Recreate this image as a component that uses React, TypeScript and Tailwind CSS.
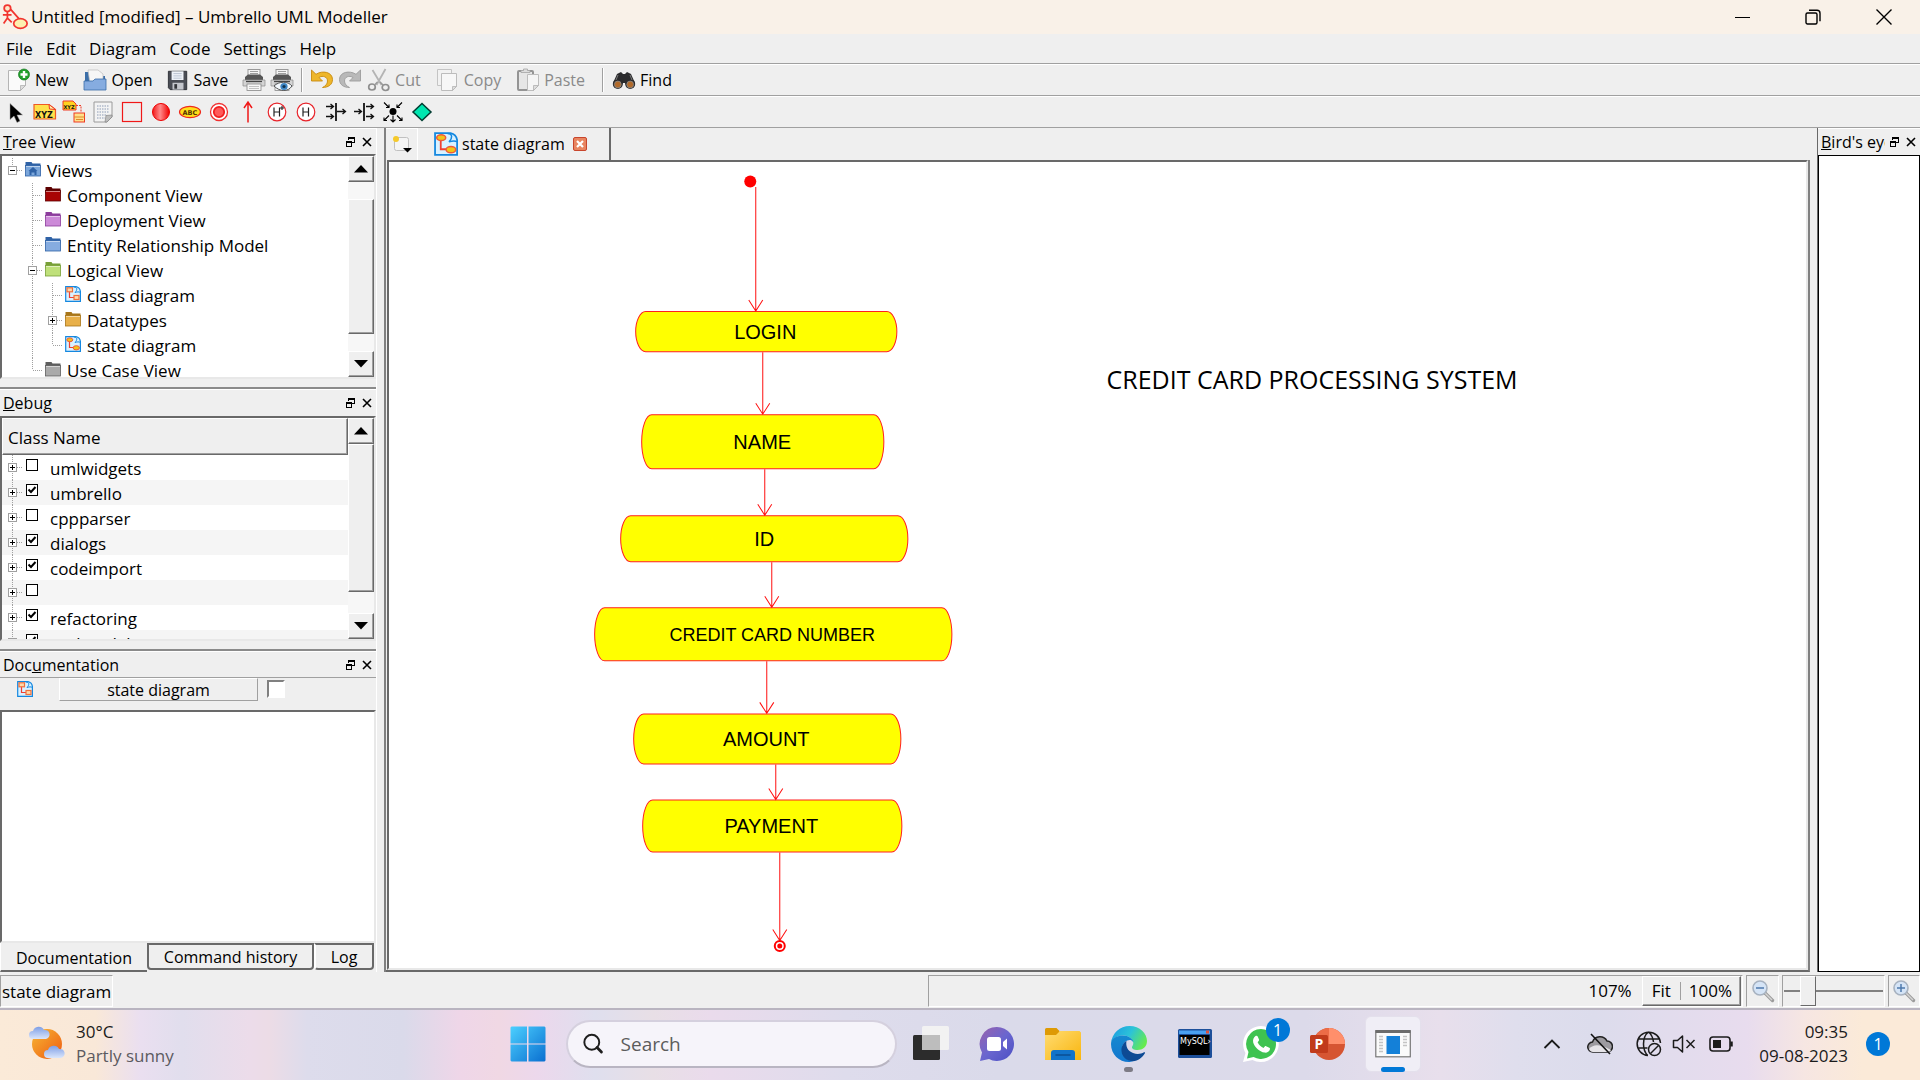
import React from "react";

const RAISED =
  "border border-t-white border-l-white border-b-[#696969] border-r-[#696969] bg-[#efefef] shadow-[inset_-1px_-1px_#a0a0a0]";

/* ---------- small icons ---------- */

function Svg({ s = 24, vb = 24, children }: { s?: number; vb?: number; children: React.ReactNode }) {
  return (
    <svg width={s} height={s} viewBox={`0 0 ${vb} ${vb}`} fill="none" className="shrink-0" aria-hidden="true">
      {children}
    </svg>
  );
}

const AppIcon = () => (
  <Svg s={26}>
    <g stroke="#f2352f" strokeWidth="1.6">
      <circle cx="5" cy="4" r="3" fill="#fde9c8" />
      <path d="M5 7v6M0.800 10h8M5 13l-3.500 5M5 13l4 4M8 5l8 9" />
      <ellipse cx="17" cy="18" rx="6.200" ry="4.400" fill="#fdf0b0" />
    </g>
  </Svg>
);

const NewIcon = () => (
  <Svg>
    <path d="M1.500 2.500h17v15l-5 5h-12z" fill="#fafafa" stroke="#b4b4b4" />
    <path d="M18.500 17.500h-5v5z" fill="#ddd" stroke="#aaa" strokeWidth=".7" />
    <circle cx="17" cy="6.500" r="5.500" fill="#22a02c" stroke="#157a1f" strokeWidth=".7" />
    <path d="M17 3v7M13.500 6.500h7" stroke="#fff" strokeWidth="2.400" />
  </Svg>
);

const OpenIcon = () => (
  <Svg>
    <path d="M2 4h9l2 4h9v12H2z" fill="#3b6ea8" />
    <path d="M5 2h10l5 4v10H7z" fill="#f6f6f6" stroke="#bbb" strokeWidth=".7" />
    <path d="M1 13h9l2-2h11v11H1z" fill="#86ace0" stroke="#3a6ca8" strokeWidth=".8" />
  </Svg>
);

const SaveIcon = () => (
  <Svg s={22}>
    <path d="M1.500 2.500h20v20h-18l-2-2z" fill="#4a4d55" stroke="#2c2e33" />
    <rect x="5" y="2.500" width="13" height="9.500" fill="#eef2f8" />
    <path d="M7 5h9M7 7.500h9M7 10h9" stroke="#a9b4c4" strokeWidth=".8" />
    <rect x="6" y="15" width="12" height="7.500" fill="#c3c6cc" />
    <rect x="8" y="16.500" width="3" height="5" fill="#33353a" />
  </Svg>
);

const PrintIcon = ({ eye = false }: { eye?: boolean }) => (
  <Svg>
    <rect x="6" y="1.500" width="12" height="8" fill="#f4f4f4" stroke="#999" />
    <path d="M3 9l3-2.500h12L21 9v4H3z" fill="#555" />
    <path d="M8 3.500h8M8 5.500h8" stroke="#888" strokeWidth=".8" />
    <path d="M1 12h22v6H1z" fill="#d4d4d4" stroke="#8a8a8a" strokeWidth=".7" />
    <path d="M4 13.500h16" stroke="#444" strokeWidth="1.300" />
    <rect x="5" y="16" width="14" height="6.500" fill="#f7f7f7" stroke="#888" strokeWidth=".8" />
    <path d="M7 18.500h10M7 20.500h10" stroke="#aaa" strokeWidth=".7" />
    {eye && (
      <>
        <path d="M4 18c5-5 14-5 18 0-4 6-12 6-18 0z" fill="#f3f8fc" stroke="#555" />
        <circle cx="14" cy="18.500" r="3.600" fill="#3e86c4" />
        <circle cx="14" cy="18.500" r="1.600" fill="#12334f" />
      </>
    )}
  </Svg>
);

const UndoIcon = ({ redo = false }: { redo?: boolean }) => (
  <Svg>
    <g transform={redo ? "translate(24 0) scale(-1 1)" : undefined}>
      <path
        d="M1.500 2v11h11L9 9.500c4-2.500 8.500-.5 8.500 3.500 0 3-2 5-5 6.500 6 0 10-3 10-8 0-7.500-10-9.500-16.500-5.200z"
        fill={redo ? "#b9b9b9" : "#eeb62a"}
        stroke={redo ? "#9c9c9c" : "#c78a10"}
        strokeWidth=".9"
      />
    </g>
  </Svg>
);

const CutIcon = () => (
  <Svg>
    <path d="M5.500 2l9 15M18.500 1l-9 16" stroke="#b4b4b4" strokeWidth="1.800" />
    <ellipse cx="5" cy="19" rx="3.300" ry="3" stroke="#8f8f8f" strokeWidth="1.700" />
    <ellipse cx="18.500" cy="19.500" rx="3.300" ry="3" stroke="#8f8f8f" strokeWidth="1.700" />
    <path d="M7.500 17l3-3M16 17l-3-3" stroke="#999" strokeWidth="1.500" />
  </Svg>
);

const CopyIcon = () => (
  <Svg>
    <path d="M1.500 1.500h14v16h-14z" fill="#f2f2f2" stroke="#c4c4c4" />
    <path d="M5.500 5.500h15v13l-4 4h-11z" fill="#f7f7f7" stroke="#bcbcbc" />
    <path d="M20.500 18.500h-4v4z" fill="#ddd" stroke="#b4b4b4" strokeWidth=".8" />
  </Svg>
);

const PasteIcon = () => (
  <Svg>
    <rect x="2" y="3" width="15" height="19" rx="1" fill="#e6e6e6" stroke="#949494" strokeWidth="2" />
    <path d="M5 4.500h9V2.500h-2.500V1h-4v1.500H5z" fill="#ddd" stroke="#a4a4a4" strokeWidth=".8" />
    <path d="M11.500 6.500h11v11l-5 5h-6z" fill="#f5f5f5" stroke="#bdbdbd" />
    <path d="M22.500 17.500h-5v5z" fill="#ddd" stroke="#b0b0b0" strokeWidth=".8" />
  </Svg>
);

const FindIcon = () => (
  <Svg>
    <path d="M5 6l4-2 2 2h2l2-2 4 2 4 9-1 3-7 1-2-4h-2l-2 4-7-1-1-3z" fill="#2b2b2d" />
    <circle cx="5.800" cy="16" r="5" fill="#2b2b2d" />
    <circle cx="18.200" cy="16" r="5" fill="#2b2b2d" />
    <circle cx="5.800" cy="16.500" r="3.400" fill="#b26a2a" stroke="#8a8a8a" strokeWidth=".8" />
    <circle cx="18.200" cy="16.500" r="3.400" fill="#b26a2a" stroke="#8a8a8a" strokeWidth=".8" />
    <path d="M6 7l-2 5M18 7l2 5" stroke="#777" />
  </Svg>
);

const Folder = ({ c, d, home = false }: { c: string; d: string; home?: boolean }) => (
  <Svg s={16} vb={16}>
    <path d="M.5 1h6l1 1.500h8v5H.5z" fill={d} />
    <rect x=".5" y="4.500" width="15" height="10.500" fill={c} stroke={d} strokeWidth=".8" />
    <path d="M1 5.500h14" stroke="#fff" strokeOpacity=".5" />
    {home && <path d="M8 6l4.500 4h-1v4h-2v-2.500h-3V14h-2v-4h-1z" fill="#2f62a6" />}
  </Svg>
);

const DiagramIcon = ({ s = 16, kind = "state" }: { s?: number; kind?: "state" | "class" }) => (
  <Svg s={s} vb={16}>
    <path d="M.7.700h10.300c2.500.5 4 2 4.400 4.600v10H.7z" fill="#d9f1ff" stroke="#1488e0" strokeWidth="1.200" />
    <path d="M9 1c3.500 0 3.500 3 1 5.500 2-.6 4-1 5.300 0" stroke="#1488e0" />
    <path d="M4.500 5v6.500h5" stroke="#ef4034" strokeWidth="1.200" />
    {kind === "state" ? (
      <g fill="#f2c417" stroke="#ee5a3a">
        <ellipse cx="4.800" cy="3.800" rx="3" ry="1.900" />
        <ellipse cx="11.300" cy="11.800" rx="3.200" ry="2.100" />
      </g>
    ) : (
      <g fill="#ffd9a8" stroke="#f0703c" strokeWidth="1.200">
        <rect x="2" y="1.800" width="5.500" height="4" />
        <rect x="9" y="9.500" width="5" height="4" />
      </g>
    )}
  </Svg>
);

const FloatIcon = () => (
  <svg width="10" height="10" viewBox="0 0 10 10" fill="none" aria-hidden="true" shapeRendering="crispEdges">
    <path d="M3.500 3V.5h5.500v5H7M3 1.500h6" stroke="#000" />
    <path d="M1 4.500h5.500v4.500H1z M1 5.500h5" stroke="#000" />
  </svg>
);

const CrossIcon = () => (
  <svg width="10" height="10" viewBox="0 0 10 10" aria-hidden="true">
    <path d="M1 1l8 8M9 1l-8 8" stroke="#000" strokeWidth="1.600" />
  </svg>
);

const Magnifier = ({ plus = false }: { plus?: boolean }) => (
  <Svg s={24}>
    <path d="M14 14l7.500 7.500" stroke="#9b9b9b" strokeWidth="3.400" strokeLinecap="round" />
    <path d="M14 14l7 7" stroke="#d5d5d5" strokeWidth="1.400" />
    <circle cx="9" cy="9" r="7" fill="#d5e4f6" stroke="#a7b2c0" strokeWidth="1.600" />
    <path d={plus ? "M5 9h8M9 5v8" : "M5 9h8"} stroke="#4d79ad" strokeWidth="1.500" />
  </Svg>
);

/* ---------- palette of drawing tools ---------- */

const H = ({ star = false }: { star?: boolean }) => (
  <Svg>
    <circle cx="12" cy="12" r="8.800" fill="#fff" stroke="#e8232a" strokeWidth="1.200" />
    <path d="M9 7.500v9M14.500 7.500v9M9 12h5.500" stroke="#222" strokeWidth="1.200" />
    {star && <path d="M17 6v4M15 8h4" stroke="#222" strokeWidth="1.100" />}
  </Svg>
);

const TOOLS: { name: string; icon: React.ReactNode }[] = [
  { name: "Select", icon: <Svg><path d="M6 3.500v16l4-3.500 3 6.500 3-1.500-3-6h5.500z" fill="#000" stroke="#999" strokeWidth=".5" /></Svg> },
  {
    name: "Object node",
    icon: (
      <Svg>
        <path d="M1 4.500h15l6.500 5v9.500H1z" fill="#ffe14a" stroke="#ef5a24" strokeWidth="1.200" />
        <path d="M16 4.500l.5 4.500 6 .5z" fill="#fff3b0" stroke="#ef3b24" />
        <text x="2" y="17.500" fontSize="8" fontWeight="700" fill="#111" fontFamily="DejaVu Sans, sans-serif">XYZ</text>
      </Svg>
    ),
  },
  {
    name: "Object flow",
    icon: (
      <Svg>
        <path d="M1 1h10l3 3v6H1z" fill="#ffd21f" stroke="#ef3b24" />
        <text x="1.500" y="8.500" fontSize="5" fontWeight="700" fill="#111" fontFamily="DejaVu Sans, sans-serif">XYZ</text>
        <path d="M14 5.500h5v7" stroke="#ef3b24" strokeDasharray="2 1" />
        <rect x="12" y="13" width="10.500" height="9" fill="#ffe08a" stroke="#ef3b24" />
        <path d="M12 17h10.500M14 19.500h7" stroke="#e08a2a" />
      </Svg>
    ),
  },
  {
    name: "Note",
    icon: (
      <Svg>
        <path d="M3 2h18v15l-5 5H3z" fill="#f3f3f3" stroke="#9a9a9a" />
        <path d="M6 6h12M6 9h12M6 12h12M6 15h10M6 18h8" stroke="#8c9bb5" strokeDasharray="1.500 1" />
        <path d="M21 15l-6 .5L14 22h2l5-5z" fill="#bdbdbd" stroke="#888" strokeWidth=".7" />
      </Svg>
    ),
  },
  { name: "Box", icon: <Svg><rect x="2.500" y="2.500" width="19" height="19" stroke="#f01818" strokeWidth="1.200" /></Svg> },
  {
    name: "Initial state",
    icon: (
      <Svg>
        <defs>
          <linearGradient id="ini"><stop stopColor="#f01818" /><stop offset=".45" stopColor="#ff8a8a" /><stop offset="1" stopColor="#f00000" /></linearGradient>
        </defs>
        <circle cx="12" cy="12" r="8.500" fill="url(#ini)" stroke="#e00" />
      </Svg>
    ),
  },
  {
    name: "State",
    icon: (
      <Svg>
        <ellipse cx="12" cy="12" rx="10.500" ry="5.600" fill="#ffdf1a" stroke="#ef2a1c" strokeWidth="1.200" />
        <text x="4.500" y="14.500" fontSize="6.500" fontWeight="700" fill="#553300" fontFamily="DejaVu Sans, sans-serif">ABC</text>
      </Svg>
    ),
  },
  {
    name: "End state",
    icon: (
      <Svg>
        <circle cx="12" cy="12" r="8.500" fill="#fff" stroke="#f03030" strokeWidth="1.300" />
        <circle cx="12" cy="12" r="5.200" fill="#ff5a5a" stroke="#f02020" strokeWidth="1.800" />
      </Svg>
    ),
  },
  { name: "Transition", icon: <Svg><path d="M12 22.500V3M8 8l4-6 4 6" stroke="#f01818" strokeWidth="1.500" /></Svg> },
  { name: "Deep history", icon: <H star /> },
  { name: "Shallow history", icon: <H /> },
  {
    name: "Join",
    icon: (
      <Svg>
        <path d="M13 3v18" stroke="#111" strokeWidth="1.800" />
        <path d="M3 6.500h7M3 16.500h7M14 11.500h8M7.500 4l3 2.500-3 2.500M7.500 14l3 2.500-3 2.500M19.500 9l3 2.500-3 2.500" stroke="#111" strokeWidth="1.300" />
      </Svg>
    ),
  },
  {
    name: "Fork",
    icon: (
      <Svg>
        <path d="M12 3v18" stroke="#111" strokeWidth="1.800" />
        <path d="M14 6.500h7M14 16.500h7M2 11.500h7M18.500 4l3 2.500-3 2.500M18.500 14l3 2.500-3 2.500M6.500 9l3 2.500-3 2.500" stroke="#111" strokeWidth="1.300" />
      </Svg>
    ),
  },
  {
    name: "Junction",
    icon: (
      <Svg>
        <circle cx="12" cy="11.500" r="3.500" fill="#000" />
        <path d="M3 2.500l5 5M21 2.500l-5 5M8 4.500v3H5M16 4.500v3h3M8 15.500l-5 5M16 15.500l5 5M3 17.500v3h3M21 17.500v3h-3M12 15.500V22M9.500 19.500L12 22l2.500-2.500" stroke="#000" strokeWidth="1.100" />
      </Svg>
    ),
  },
  { name: "Choice", icon: <Svg><path d="M12 3.500l9 8.500-9 8.500-9-8.500z" fill="#00e6b0" stroke="#003c30" strokeWidth="1.500" /></Svg> },
];

function Separator() {
  return <div className="mx-[5px] h-6 w-0.5 border-l border-r border-l-[#a0a0a0] border-r-white" />;
}

function ToolButton({ icon, text, name, disabled }: { icon: React.ReactNode; text?: string; name?: string; disabled?: boolean }) {
  return (
    <button
      type="button"
      aria-label={name ?? text}
      className={
        "flex h-7 items-center gap-1 text-base leading-6 " +
        (text ? "pl-[3px] pr-3 " : "px-[2px] ") +
        (disabled ? "text-[#8a8a8a]" : "text-black")
      }
    >
      {icon}
      {text}
    </button>
  );
}

/* ---------- docks ---------- */

function DockTitle({ children }: { children: React.ReactNode }) {
  return (
    <div className="flex h-[26px] shrink-0 items-center border-t border-t-white pl-[3px] pr-px text-base leading-6">
      <h2 className="min-w-0 flex-1 overflow-hidden whitespace-nowrap">{children}</h2>
      <button type="button" aria-label="Float panel" className="flex size-[17px] items-center justify-center"><FloatIcon /></button>
      <button type="button" aria-label="Close panel" className="flex size-[17px] items-center justify-center"><CrossIcon /></button>
    </div>
  );
}

function Scrollbar({ before, thumb }: { before: string; thumb: string }) {
  return (
    <div className="flex w-[26px] shrink-0 flex-col bg-[#f7f7f7]">
      <button type="button" aria-label="Scroll up" className={"flex h-[26px] shrink-0 items-center justify-center " + RAISED}>
        <svg width="14" height="8" viewBox="0 0 14 8" aria-hidden="true"><path d="M7 0l7 7.500H0z" /></svg>
      </button>
      <div className={before} />
      <div className={thumb + " " + RAISED} />
      <div className="flex-1" />
      <button type="button" aria-label="Scroll down" className={"flex h-[26px] shrink-0 items-center justify-center " + RAISED}>
        <svg width="14" height="8" viewBox="0 0 14 8" aria-hidden="true"><path d="M7 7.500L0 0h14z" /></svg>
      </button>
    </div>
  );
}

type Cell = "none" | "line" | "tee" | "end" | "minus" | "minusTop" | "plus";

function Guide({ cell }: { cell: Cell }) {
  const box = cell === "minus" || cell === "plus" || cell === "minusTop";
  return (
    <svg width="20" height="25" viewBox="0 0 20 25" fill="none" className="shrink-0" aria-hidden="true" shapeRendering="crispEdges">
      <g stroke="#a0a0a0" strokeDasharray="1 1">
        {cell !== "none" && <path d="M10.500 0v12" />}
        {(cell === "line" || cell === "tee" || cell === "minus" || cell === "plus") && <path d="M10.500 12v13" />}
        {cell !== "none" && cell !== "line" && <path d="M11 12.500h9" />}
      </g>
      {box && (
        <>
          <rect x="6.500" y="8.500" width="8" height="8" fill="#fff" stroke="#a0a0a0" />
          <path d={cell === "plus" ? "M8 12.500h5M10.500 10v5" : "M8 12.500h5"} stroke="#000" />
        </>
      )}
    </svg>
  );
}

const TREE: { cells: Cell[]; icon: React.ReactNode; label: string }[] = [
  { cells: ["minusTop"], icon: <Folder c="#7ba6da" d="#2f62a6" home />, label: "Views" },
  { cells: ["none", "tee"], icon: <Folder c="#a80404" d="#5c0000" />, label: "Component View" },
  { cells: ["none", "tee"], icon: <Folder c="#cc8ad8" d="#8c3c9c" />, label: "Deployment View" },
  { cells: ["none", "tee"], icon: <Folder c="#86ace0" d="#2f62a6" />, label: "Entity Relationship Model" },
  { cells: ["none", "minus"], icon: <Folder c="#bfe07a" d="#78a038" />, label: "Logical View" },
  { cells: ["none", "line", "tee"], icon: <DiagramIcon kind="class" />, label: "class diagram" },
  { cells: ["none", "line", "plus"], icon: <Folder c="#e8b04a" d="#a8761a" />, label: "Datatypes" },
  { cells: ["none", "line", "end"], icon: <DiagramIcon />, label: "state diagram" },
  { cells: ["none", "end"], icon: <Folder c="#aaaaaa" d="#5e5e5e" />, label: "Use Case View" },
];

const CLASSES: [string, boolean][] = [
  ["umlwidgets", false],
  ["umbrello", true],
  ["cppparser", false],
  ["dialogs", true],
  ["codeimport", true],
  ["", false],
  ["refactoring", true],
  ["umlmodel", true],
];

const SUNKEN = "border-2 border-t-[#696969] border-l-[#696969] border-b-[#e8e8e8] border-r-[#e8e8e8] bg-white";

function LeftDocks() {
  return (
    <aside className="flex w-[377px] shrink-0 flex-col border-r border-r-white">
      <section>
        <DockTitle><u>T</u>ree View</DockTitle>
        <div className={"flex h-[225px] w-full " + SUNKEN}>
          <ul className="min-w-0 flex-1 overflow-hidden pt-[2px]">
            {TREE.map((n) => (
              <li key={n.label} className="flex h-[25px] items-center">
                {n.cells.map((c, i) => <Guide key={i} cell={c} />)}
                <span className="ml-[3px] mr-[6px] -mt-1">{n.icon}</span>
                <span className="whitespace-nowrap leading-6">{n.label}</span>
              </li>
            ))}
          </ul>
          <Scrollbar before="h-[17px]" thumb="h-[135px]" />
        </div>
      </section>

      <section className="mt-2 border-t-2 border-t-[#8a8a8a]">
        <DockTitle><u>D</u>ebug</DockTitle>
        <div className={"mt-px flex h-[225px] w-full " + SUNKEN}>
          <div className="min-w-0 flex-1 overflow-hidden">
            <div className={"flex h-[37px] items-center pl-[5px] pt-0.5 leading-6 " + RAISED}>Class Name</div>
            <ul>
              {CLASSES.map(([name, on], i) => (
                <li key={i} className="flex h-[25px] odd:bg-white even:bg-[#f5f5f5]">
                  <Guide cell="plus" />
                  <label className="flex flex-1 items-start pl-1 leading-6">
                    <span className="relative mt-1 mr-3 size-3 shrink-0">
                      <input type="checkbox" defaultChecked={on} aria-label={name || "unnamed"} className="peer block size-3 appearance-none border border-black bg-white" />
                      <svg viewBox="0 0 12 12" className="pointer-events-none absolute inset-0 hidden size-3 peer-checked:block" aria-hidden="true">
                        <path d="M2.500 5.500l2.500 2.500 4.500-5" fill="none" stroke="#000" strokeWidth="2" />
                      </svg>
                    </span>
                    <span className="mt-0.5">{name}</span>
                  </label>
                </li>
              ))}
            </ul>
          </div>
          <Scrollbar before="h-0" thumb="h-[148px]" />
        </div>
      </section>

      <section className="mt-2 flex flex-1 flex-col border-t-2 border-t-[#8a8a8a]">
        <DockTitle>Doc<u>u</u>mentation</DockTitle>
        <div className="flex h-[33px] items-start border-t border-t-[#a0a0a0] pl-[17px]">
          <span className="mt-[3px]"><DiagramIcon kind="class" /></span>
          <div className="ml-[26px] h-[23px] w-[199px] border border-t-white border-l-white border-b-[#a0a0a0] border-r-[#a0a0a0] text-center text-base leading-[22px]">
            state diagram
          </div>
          <input type="checkbox" aria-label="Show documentation" className="ml-[9px] mt-[2px] size-[18px] appearance-none border-2 border-t-[#808080] border-l-[#808080] border-b-white border-r-white bg-white" />
        </div>
        <textarea aria-label="Documentation text" className={"w-full flex-1 resize-none outline-none " + SUNKEN} />
        <div role="tablist" className="flex h-[29px] items-start text-base">
          <button type="button" role="tab" aria-selected="true" className="h-[29px] w-[147px] border-b-2 border-l border-b-[#696969] border-l-white pt-0.5 leading-6">
            Documentation
          </button>
          <button type="button" role="tab" className="h-[27px] w-[167px] rounded-b-sm border-2 border-r-[#696969] border-b-[#696969] border-l-[#696969] border-t-[#696969] leading-6">
            Command history
          </button>
          <button type="button" role="tab" className="h-[27px] w-[60px] rounded-b-sm border-2 border-r-[#696969] border-b-[#696969] border-l-white border-t-[#696969] leading-6">
            Log
          </button>
        </div>
      </section>
    </aside>
  );
}

/* ---------- diagram ---------- */

const NODES = [
  { label: "LOGIN", x: 635, y: 311, w: 262, h: 41, tx: 765 },
  { label: "NAME", x: 641, y: 414, w: 243, h: 55, tx: 762 },
  { label: "ID", x: 620, y: 515, w: 288, h: 47, tx: 764 },
  { label: "CREDIT CARD NUMBER", x: 594, y: 607, w: 358, h: 54, tx: 772, small: true },
  { label: "AMOUNT", x: 633, y: 713, w: 268, h: 51, tx: 766 },
  { label: "PAYMENT", x: 642, y: 799, w: 260, h: 53, tx: 771 },
];

const ARROWS = [
  [755, 187, 311],
  [762, 352, 414],
  [764, 469, 515],
  [771, 562, 607],
  [766, 661, 713],
  [775, 764, 799],
  [779, 852, 940],
];

function Diagram() {
  return (
    <svg viewBox="389 162 1416 807" preserveAspectRatio="xMinYMin slice" className="block size-full" role="img" aria-label="State diagram">
      {NODES.map((n) => {
        const r = n.h / 2;
        return (
          <g key={n.label}>
            <rect x={n.x + 0.5} y={n.y + 0.5} width={n.w - 1} height={n.h - 1} rx="10" ry={r} fill="#ffff00" stroke="#ff2020" />
            <text x={n.tx} y={Math.round(n.y + r + 7)} textAnchor="middle" fontSize={n.small ? 18 : 20} fontFamily="Liberation Sans, sans-serif">
              {n.label}
            </text>
          </g>
        );
      })}
      <g stroke="#ff1010" fill="none" strokeWidth="1">
        {ARROWS.map(([x, a, b]) => (
          <path key={a} d={`M${x + 0.5} ${a}V${b}M${x - 6.500} ${b - 11}L${x + 0.5} ${b}L${x + 7.500} ${b - 11}`} />
        ))}
      </g>
      <circle cx="750" cy="181.500" r="6" fill="#f00" />
      <circle cx="779.500" cy="945.500" r="5" fill="#fff" stroke="#f00" strokeWidth="2" />
      <circle cx="779.500" cy="945.500" r="2.500" fill="#f00" />
      <text x="1106" y="389" fontSize="25" fontFamily="Open Sans, sans-serif">CREDIT CARD PROCESSING SYSTEM</text>
    </svg>
  );
}

function Workspace() {
  return (
    <main className="ml-[7px] flex min-w-0 flex-1 flex-col border-l-2 border-l-[#808080]">
      <div className="flex h-8 items-center">
        <button type="button" aria-label="New diagram" className="flex h-full w-8 items-center justify-center border-r border-t border-r-white border-t-white">
          <svg width="22" height="22" viewBox="0 0 22 22" fill="none" aria-hidden="true">
            <rect x="3.500" y="3.500" width="14" height="13" rx="2" fill="#f4f4f4" stroke="#c0c0c0" />
            <circle cx="5" cy="5" r="3" fill="#f5c92a" />
            <path d="M12 14h9l-4.500 4.500z" fill="#000" />
          </svg>
        </button>
        <div role="tab" className="flex h-full w-[193px] items-center border-r-2 border-r-[#696969] pl-4 text-base">
          <DiagramIcon s={24} />
          <span className="ml-1 whitespace-nowrap leading-6">state diagram</span>
          <button type="button" aria-label="Close tab" className="ml-2 size-[14px]">
            <svg width="14" height="14" viewBox="0 0 14 14" aria-hidden="true">
              <rect x=".5" y=".5" width="13" height="13" rx="1.500" fill="#e88560" stroke="#c8452c" />
              <path d="M4 4l6 6M10 4l-6 6" stroke="#fff" strokeWidth="2.200" />
            </svg>
          </button>
        </div>
      </div>
      <div className="min-h-0 flex-1 overflow-hidden border-b-2 border-r-2 border-b-[#696969] border-r-[#808080] bg-[#efefef] pl-px">
        <div className="h-full overflow-hidden border-2 border-b-[#e8e8e8] border-l-[#696969] border-r-[#e8e8e8] border-t-[#696969] bg-white">
          <Diagram />
        </div>
      </div>
    </main>
  );
}

/* ---------- taskbar ---------- */

const WeatherIcon = () => (
  <Svg s={36} vb={36}>
    <defs>
      <linearGradient id="sun" x1="0" y1="0" x2="1" y2="1"><stop stopColor="#f7b733" /><stop offset="1" stopColor="#ee5a12" /></linearGradient>
      <linearGradient id="cl" x1="0" y1="0" x2="0" y2="1"><stop stopColor="#7f9fe6" /><stop offset="1" stopColor="#dbe6fb" /></linearGradient>
    </defs>
    <circle cx="18" cy="18" r="15" fill="url(#sun)" />
    <path d="M4 13a4 4 0 0 1 0-8 6 6 0 0 1 11-1 4.500 4.500 0 0 1 2 9z" fill="url(#cl)" />
    <path d="M19 32a4 4 0 0 1 0-8 6 6 0 0 1 11-1 4.500 4.500 0 0 1 2 9z" fill="url(#cl)" />
  </Svg>
);

const StartIcon = () => (
  <Svg s={36} vb={36}>
    <defs><linearGradient id="win" x1="0" y1="0" x2="1" y2="1"><stop stopColor="#4cd0ff" /><stop offset="1" stopColor="#0a6fd0" /></linearGradient></defs>
    <path d="M1.500.500H17v17H.5v-16zM18.500.500h16l1 1v16h-17zM.5 18.500H17v17H1.500l-1-1zM18.500 18.500h17v16l-1 1h-16z" fill="url(#win)" />
  </Svg>
);

const TaskViewIcon = () => (
  <Svg s={36} vb={36}>
    <rect y="9" width="27" height="25" rx="1.500" fill="#2c2c2c" />
    <rect x="9" width="27" height="24" rx="1.500" fill="#f2f2f2" />
    <path d="M9 9h18v15H9z" fill="#bdbdbd" />
  </Svg>
);

const ChatIcon = () => (
  <Svg s={36} vb={36}>
    <defs><linearGradient id="chat" x1="0" y1="0" x2="1" y2="1"><stop stopColor="#9a62ac" /><stop offset=".5" stopColor="#6a66cf" /><stop offset="1" stopColor="#4b4fc4" /></linearGradient></defs>
    <path d="M18 1a17 17 0 1 1-8 32l-9 2 2-8.500A17 17 0 0 1 18 1z" fill="url(#chat)" />
    <rect x="8" y="11" width="14" height="14" rx="2.500" fill="#fff" />
    <path d="M24 16l4-3.500v11L24 20z" fill="#fff" />
  </Svg>
);

const ExplorerIcon = () => (
  <Svg s={36} vb={36}>
    <defs><linearGradient id="fld" x1="0" y1="0" x2="1" y2="1"><stop stopColor="#ffdc72" /><stop offset="1" stopColor="#f9b50e" /></linearGradient></defs>
    <path d="M0 3.500A1.500 1.500 0 0 1 1.500 2h10l3 3v6H0z" fill="#de9a04" />
    <path d="M0 9h11l4-4h19.500L36 6.500V34H0z" fill="url(#fld)" />
    <path d="M6 34v-7a3 3 0 0 1 3-3h18a3 3 0 0 1 3 3v7z" fill="#1173c9" />
    <path d="M11 29h14" stroke="#0b4f92" strokeWidth="1.500" strokeLinecap="round" />
  </Svg>
);

const EdgeIcon = () => (
  <Svg s={36} vb={36}>
    <defs>
      <linearGradient id="e1" x1="0" y1=".2" x2="1" y2=".6"><stop stopColor="#1b9de2" /><stop offset=".5" stopColor="#2cc3d8" /><stop offset="1" stopColor="#66eb4e" /></linearGradient>
      <linearGradient id="e2" x1="0" y1="0" x2="0" y2="1"><stop stopColor="#1689d0" /><stop offset="1" stopColor="#1276ce" /></linearGradient>
    </defs>
    <path d="M0 17C1 7 9 0 18.500 0 29 0 36 7.500 36 15c0 6-4.500 9-9.500 9-4 0-6-1.500-5.500-3 .6-1.400 1.300-2 1.300-4C22 13 17.500 9.500 12 9.500 6 9.500 1.500 12.500 0 17z" fill="url(#e1)" />
    <path d="M0 18c0-5 5-8.500 11.500-8.500S22 13 22.300 16c-1.800-2.500-4-2.500-6-1.500-4 2-6 6.500-5 11 1 5 5 9 11 9.500-2 .8-3 1-4.500 1C8 36 0 28.500 0 18z" fill="url(#e2)" />
    <path d="M15.500 15c-1 5 1 10 6.500 12 4.500 1.600 8 .8 11-.7.8-.4 1.300.2.9.900C31.500 31.500 27 35 22 35.200 15.500 35 11 31 10.500 25c-.3-4 1.500-8 5-10z" fill="#0d4a94" />
  </Svg>
);

const MysqlIcon = () => (
  <Svg s={36} vb={36}>
    <rect x="1" y="3" width="34" height="29" rx="1.500" fill="#1d4f9a" />
    <rect x="2" y="4.500" width="31" height="3.500" fill="#4aa0f0" />
    <rect x="29" y="4.500" width="3" height="3" fill="#e0503a" />
    <rect x="2.500" y="9" width="30" height="20" fill="#000" />
    <text x="3" y="18" fontSize="8" fill="#fff" fontFamily="DejaVu Sans, sans-serif">MySQL›</text>
  </Svg>
);

const WhatsappIcon = () => (
  <Svg s={36} vb={36}>
    <path d="M18 0a18 18 0 1 1-8.500 34L0 36l2.500-9A18 18 0 0 1 18 0z" fill="#fff" />
    <path d="M18 3a15 15 0 1 1-7.500 28L4 32.500 5.500 26A15 15 0 0 1 18 3z" fill="#3fc351" />
    <path d="M12.500 10c.8-.6 1.800-.4 2.200.5l1.300 3c.3.700 0 1.300-1.400 2.700 1.400 3 3.400 4.700 6 5.700 1.200-1.600 1.800-2 2.500-1.700l3.200 1.600c.8.400.8 1 .5 2-.7 2-3 3.200-5.200 2.800-5.200-1-10-5.400-11.400-10.200-.6-2.600.4-5 2.300-6.400z" fill="#fff" />
  </Svg>
);

const PowerpointIcon = () => (
  <Svg s={36} vb={36}>
    <circle cx="20" cy="18" r="16" fill="#d65532" />
    <path d="M20 2a16 16 0 0 1 16 16H20z" fill="#ff8f6b" />
    <path d="M20 2A16 16 0 0 0 4 18h16z" fill="#ec6c47" />
    <rect x="1" y="9" width="18" height="18" rx="1.500" fill="#c13b1b" />
    <text x="5.500" y="23" fontSize="14" fontWeight="700" fill="#fff" fontFamily="Open Sans, sans-serif">P</text>
  </Svg>
);

const WindowIcon = () => (
  <Svg s={36} vb={36}>
    <rect x=".8" y="4.800" width="34.500" height="26" fill="#fafafa" stroke="#777" strokeWidth="1.200" />
    <rect x=".5" y="4" width="35" height="3" fill="#6c6c6c" />
    <rect x="11.500" y="10" width="13.500" height="18" fill="#1480d8" />
    <path d="M4 10.500h4M4 13.500h4M4 16.500h4M4 19.500h4M4 22.500h4M4 25.500h4M28 10.500h4M28 13.500h4M28 16.500h4M28 19.500h4" stroke="#c4c4c4" strokeWidth="1.600" />
  </Svg>
);

function TaskButton({ name, children }: { name: string; children: React.ReactNode }) {
  return (
    <button type="button" aria-label={name} className="relative flex h-14 w-[66px] items-center justify-center">
      {children}
    </button>
  );
}

function Taskbar() {
  return (
    <footer className="grid h-[72px] grid-cols-[1fr_auto_1fr] items-center border-t-2 border-t-[#b9b4c0] bg-[linear-gradient(90deg,#fbead8_0%,#f9e8d8_5%,#eadff0_7.300%,#e1deed_9.500%,#ecdcea_13%,#ecdce6_14%,#dddcec_16%,#dadaea_21%,#efd6e8_24%,#f0d8e4_26%,#ecd8ec_28%,#dfdfee_31%,#e8dfe6_34%,#eadbec_37%,#dedcec_44%,#dadaea_52%,#dcdaea_68%,#e8dfec_75%,#dfdeed_79%,#dcdcec_83%,#e8dcee_91%,#f6e6e2_94%,#fbead8_97%,#fbead8_100%)] pb-0.5 text-[#1b1b1b]">
      <button type="button" className="ml-[29px] flex items-center gap-[11px] justify-self-start text-left">
        <WeatherIcon />
        <span className="flex flex-col leading-6">
          <span>30°C</span>
          <span className="text-[#5c5a60]">Partly sunny</span>
        </span>
      </button>
      <div className="flex items-center">
        <button type="button" aria-label="Start" className="mr-5 ml-[15px]"><StartIcon /></button>
        <label className="mr-px flex h-12 w-[331px] items-center gap-[17px] rounded-full border-2 border-[#d5d0de] border-b-[#b9b5c2] bg-[#f6f4fa] pl-[15px]">
          <svg width="24" height="24" viewBox="0 0 24 24" fill="none" aria-hidden="true">
            <circle cx="10" cy="10" r="8.500" stroke="#1e1e1e" strokeWidth="2.200" />
            <path d="M16 16l5 5" stroke="#1e1e1e" strokeWidth="3.200" strokeLinecap="round" />
          </svg>
          <input type="search" placeholder="Search" aria-label="Search" className="w-full min-w-0 bg-transparent text-[19px] text-[#5c5c5c] outline-none placeholder:text-[#5c5c5c]" />
        </label>
        <TaskButton name="Task view"><TaskViewIcon /></TaskButton>
        <TaskButton name="Chat"><ChatIcon /></TaskButton>
        <TaskButton name="File Explorer"><ExplorerIcon /></TaskButton>
        <TaskButton name="Edge">
          <EdgeIcon />
          <span className="absolute bottom-0 h-[5px] w-[9px] rounded-full bg-[#7d7b85]" />
        </TaskButton>
        <TaskButton name="MySQL"><MysqlIcon /></TaskButton>
        <TaskButton name="WhatsApp">
          <WhatsappIcon />
          <span className="absolute top-0.5 right-1 flex size-6 items-center justify-center rounded-full bg-[#0078d7] text-base text-white">1</span>
        </TaskButton>
        <TaskButton name="PowerPoint"><PowerpointIcon /></TaskButton>
        <TaskButton name="Umbrello">
          <span className="flex h-14 w-14 items-center justify-center rounded-md border border-[#e4e0ec] bg-[#f0eef6]"><WindowIcon /></span>
          <span className="absolute bottom-0 h-[5px] w-6 rounded-full bg-[#0078d7]" />
        </TaskButton>
      </div>
      <div className="mr-[30px] flex items-center justify-self-end">
        <button type="button" aria-label="Show hidden icons" className="mr-[26px]">
          <svg width="18" height="24" viewBox="0 0 18 24" fill="none" aria-hidden="true"><path d="M1.500 16L9 8.500l7.500 7.500" stroke="#1b1b1b" strokeWidth="1.800" /></svg>
        </button>
        <svg width="26" height="24" viewBox="0 0 26 24" fill="none" className="mr-[23px]" aria-hidden="true">
          <path d="M6 20a5 5 0 0 1-.5-10A8 8 0 0 1 20 9a5.500 5.500 0 0 1 0 11z" fill="#9d9ba0" stroke="#222" strokeWidth="1.500" />
          <path d="M2 17c5-5 10-5 22 1-1 2-3 2-4 2H6c-2 0-3-1-4-3z" fill="#e6e4e8" />
          <path d="M4 2l19 20" stroke="#111" strokeWidth="1.600" />
        </svg>
        <svg width="26" height="26" viewBox="0 0 26 26" fill="none" className="mr-2.5" aria-hidden="true" stroke="#1b1b1b" strokeWidth="1.500">
          <path d="M12 24.500A11.700 11.700 0 1 1 24.500 12M12.500 1c-4 3-5 8-5 12s1 8 4 11.500M12.500 1c3 2.500 4.500 6 5 10M2.500 8h20.500M2.500 17h9" />
          <circle cx="18.500" cy="18.500" r="6" />
          <path d="M14.500 22.500l8-8" />
        </svg>
        <svg width="24" height="24" viewBox="0 0 24 24" fill="none" className="mr-[13px]" aria-hidden="true" stroke="#1b1b1b" strokeWidth="1.500">
          <path d="M1.500 8.500v7h4l5 4.500V4l-5 4.500z" strokeLinejoin="round" />
          <path d="M14.500 8l8 8M22.500 8l-8 8" />
        </svg>
        <svg width="25" height="24" viewBox="0 0 25 24" fill="none" className="mr-[25px]" aria-hidden="true">
          <rect x="1" y="5" width="20" height="14" rx="3" stroke="#1b1b1b" strokeWidth="1.600" />
          <rect x="4" y="8" width="8" height="8" fill="#1b1b1b" />
          <path d="M22.500 9.500v5" stroke="#1b1b1b" strokeWidth="2.500" />
        </svg>
        <div className="mr-[18px] flex flex-col text-right leading-6">
          <time>09:35</time>
          <time>09-08-2023</time>
        </div>
        <button type="button" aria-label="1 notification" className="size-6 rounded-full bg-[#0078d7] text-base leading-6 text-white">1</button>
      </div>
    </footer>
  );
}

/* ---------- page ---------- */

export default function App() {
  return (
    <div className="flex h-screen flex-col overflow-hidden bg-[#efefef] font-['Open_Sans',sans-serif] text-[17px] text-black">
      <header className="flex h-[34px] shrink-0 items-center bg-[#f9f1e8] pl-0.5 leading-6">
        <AppIcon />
        <h1 className="ml-[3px] flex-1 whitespace-nowrap">Untitled [modified] – Umbrello UML Modeller</h1>
        <button type="button" aria-label="Minimize" className="flex h-full w-[70px] items-center justify-center">
          <svg width="16" height="16" aria-hidden="true"><path d="M0 8.500h15" stroke="#000" /></svg>
        </button>
        <button type="button" aria-label="Restore" className="flex h-full w-[70px] items-center justify-center">
          <svg width="16" height="16" viewBox="0 0 16 16" fill="none" stroke="#000" strokeWidth="1.400" aria-hidden="true">
            <rect x="1" y="4" width="11" height="11" rx="1.500" />
            <path d="M4 1.200h8a3 3 0 0 1 3 3v8" />
          </svg>
        </button>
        <button type="button" aria-label="Close" className="flex h-full w-[72px] items-center justify-center">
          <svg width="16" height="16" aria-hidden="true"><path d="M.5.500l15 15M15.500.500l-15 15" stroke="#000" strokeWidth="1.400" /></svg>
        </button>
      </header>

      <nav className="flex h-[30px] shrink-0 items-center gap-[13px] border-b border-b-[#a0a0a0] pl-1.5 leading-6">
        {["File", "Edit", "Diagram", "Code", "Settings", "Help"].map((m) => (
          <button key={m} type="button">{m}</button>
        ))}
      </nav>

      <div className="flex h-8 shrink-0 items-center border-t border-b border-b-[#a0a0a0] border-t-white pl-1">
        <ToolButton icon={<NewIcon />} text="New" />
        <ToolButton icon={<OpenIcon />} text="Open" />
        <ToolButton icon={<SaveIcon />} text="Save" />
        <ToolButton icon={<PrintIcon />} name="Print" />
        <ToolButton icon={<PrintIcon eye />} name="Print preview" />
        <Separator />
        <ToolButton icon={<UndoIcon />} name="Undo" />
        <ToolButton icon={<UndoIcon redo />} name="Redo" />
        <ToolButton icon={<CutIcon />} text="Cut" disabled />
        <ToolButton icon={<CopyIcon />} text="Copy" disabled />
        <ToolButton icon={<PasteIcon />} text="Paste" disabled />
        <Separator />
        <ToolButton icon={<FindIcon />} text="Find" />
      </div>

      <div className="flex h-8 shrink-0 items-center border-t border-b border-b-[#a0a0a0] border-t-white pl-px">
        {TOOLS.map((t) => (
          <button key={t.name} type="button" aria-label={t.name} className="flex h-7 w-[29px] items-center justify-center">
            {t.icon}
          </button>
        ))}
      </div>

      <div className="flex min-h-0 flex-1">
        <LeftDocks />
        <Workspace />
        <aside className="ml-[7px] flex w-[103px] shrink-0 flex-col border-l border-l-[#696969]">
          <DockTitle><u>B</u>ird's eye view</DockTitle>
          <div className="mt-px flex-1 border border-black bg-white" />
        </aside>
      </div>

      <div className="flex h-9 shrink-0 items-center gap-[3px] pt-0.5">
        <div className="h-8 border border-b-white border-l-[#a0a0a0] border-r-white border-t-[#a0a0a0] px-px leading-8">state diagram</div>
        <div className="flex-1" />
        <div className="flex h-8 w-[815px] items-center justify-end border border-b-white border-l-[#a0a0a0] border-r-white border-t-[#a0a0a0]">
          <span className="mr-2.5">107%</span>
          <div className={"mr-px flex h-[30px] items-center " + RAISED}>
            <button type="button" className="px-[9px]">Fit</button>
            <div className="h-[18px] w-px bg-[#a0a0a0]" />
            <button type="button" className="px-2">100%</button>
          </div>
        </div>
        <button type="button" aria-label="Zoom out" className="flex h-8 w-[33px] items-center justify-center border border-b-white border-l-[#a0a0a0] border-r-white border-t-[#a0a0a0]">
          <Magnifier />
        </button>
        <div className="flex h-8 w-[103px] items-center border border-b-white border-l-[#a0a0a0] border-r-white border-t-[#a0a0a0] px-px">
          <input
            type="range"
            aria-label="Zoom"
            min="0"
            max="500"
            defaultValue="97"
            className="h-[30px] w-full appearance-none bg-[linear-gradient(#808080,#808080)] bg-[length:100%_2px] bg-center bg-no-repeat [&::-webkit-slider-thumb]:h-[30px] [&::-webkit-slider-thumb]:w-4 [&::-webkit-slider-thumb]:appearance-none [&::-webkit-slider-thumb]:border [&::-webkit-slider-thumb]:border-b-[#696969] [&::-webkit-slider-thumb]:border-l-white [&::-webkit-slider-thumb]:border-r-[#696969] [&::-webkit-slider-thumb]:border-t-white [&::-webkit-slider-thumb]:bg-[#efefef]"
          />
        </div>
        <button type="button" aria-label="Zoom in" className="flex h-8 w-8 items-center justify-center border border-b-white border-l-[#a0a0a0] border-r-white border-t-[#a0a0a0]">
          <Magnifier plus />
        </button>
      </div>

      <Taskbar />
    </div>
  );
}
